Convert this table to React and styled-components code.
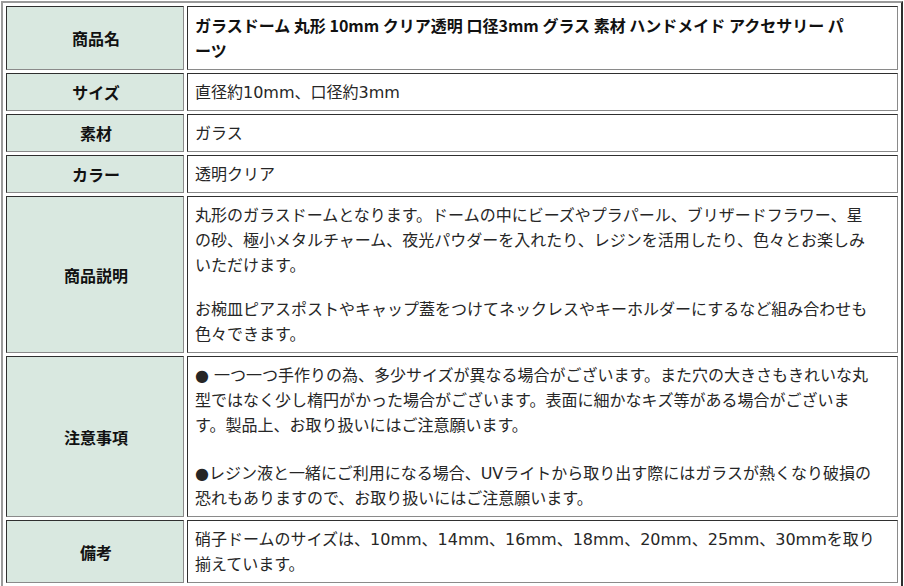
import React from "react";
import styled, { createGlobalStyle } from "styled-components";

const Global = createGlobalStyle`
  html, body { margin: 0; padding: 0; background: #ffffff; }
  body {
    font-family: "Noto Sans CJK JP", "Noto Sans", sans-serif;
    color: #222;
  }
`;

const Wrap = styled.div`
  padding: 1px;
  width: 902px;
`;

const Table = styled.table`
  width: 902px;
  table-layout: fixed;
  border-collapse: separate;
  border-spacing: 3px;
  border-style: solid;
  border-width: 2px 2px 3px 2px;
  border-color: #9a9a9a #2e2e2e #2e2e2e #9a9a9a;
  font-size: 16px;
  line-height: 25px;
`;

const Cell = styled.td`
  border-style: solid;
  border-width: 1px;
  border-color: #2f2f2f #8a8a8a #8a8a8a #2f2f2f;
  padding: 6px 8px ${(p) => p.$padBottom ?? 5}px 7px;
  vertical-align: middle;
  word-break: keep-all;
  white-space: nowrap;
`;

const Label = styled(Cell)`
  width: 176px;
  box-sizing: border-box;
  background: #d9e8e0;
  text-align: center;
  font-weight: 700;
  color: #111;
  padding-left: 2px;
  padding-right: 0;
`;

const Value = styled(Cell)`
  background: #ffffff;
  text-align: left;
  font-family: ${(p) =>
    p.$bold
      ? `"Noto Sans CJK JP", "Noto Sans", sans-serif`
      : `"DejaVu Sans", "Noto Sans CJK JP", sans-serif`};
  font-weight: ${(p) => (p.$bold ? 700 : 400)};
  color: ${(p) => (p.$bold ? "#111" : "#262626")};
`;

const Para = styled.div`
  margin-top: ${(p) => p.$gap || 0}px;
`;

const rows = [
  {
    label: "商品名",
    bold: true,
    padBottom: 6,
    paras: [["ガラスドーム 丸形 10mm クリア透明 口径3mm グラス 素材 ハンドメイド アクセサリー パ", "ーツ"]],
  },
  { label: "サイズ", paras: [["直径約10mm、口径約3mm"]] },
  { label: "素材", paras: [["ガラス"]] },
  { label: "カラー", paras: [["透明クリア"]] },
  {
    label: "商品説明",
    gap: 19,
    paras: [
      [
        "丸形のガラスドームとなります。ドームの中にビーズやプラパール、ブリザードフラワー、星",
        "の砂、極小メタルチャーム、夜光パウダーを入れたり、レジンを活用したり、色々とお楽しみ",
        "いただけます。",
      ],
      [
        "お椀皿ピアスポストやキャップ蓋をつけてネックレスやキーホルダーにするなど組み合わせも",
        "色々できます。",
      ],
    ],
  },
  {
    label: "注意事項",
    gap: 23,
    paras: [
      [
        "● 一つ一つ手作りの為、多少サイズが異なる場合がございます。また穴の大きさもきれいな丸",
        "型ではなく少し楕円がかった場合がございます。表面に細かなキズ等がある場合がございま",
        "す。製品上、お取り扱いにはご注意願います。",
      ],
      [
        "●レジン液と一緒にご利用になる場合、UVライトから取り出す際にはガラスが熱くなり破損の",
        "恐れもありますので、お取り扱いにはご注意願います。",
      ],
    ],
  },
  {
    label: "備考",
    paras: [
      [
        "硝子ドームのサイズは、10mm、14mm、16mm、18mm、20mm、25mm、30mmを取り",
        "揃えています。",
      ],
    ],
  },
];

export default function App() {
  return (
    <>
      <Global />
      <Wrap>
        <Table>
          <colgroup>
            <col style={{ width: 178 }} />
            <col />
          </colgroup>
          <tbody>
            {rows.map((r) => (
              <tr key={r.label}>
                <Label $padBottom={r.padBottom}>{r.label}</Label>
                <Value $bold={r.bold} $padBottom={r.padBottom}>
                  {r.paras.map((lines, i) => (
                    <Para key={i} $gap={i > 0 ? r.gap : 0}>
                      {lines.map((l, j) => (
                        <React.Fragment key={j}>
                          {j > 0 && <br />}
                          {l}
                        </React.Fragment>
                      ))}
                    </Para>
                  ))}
                </Value>
              </tr>
            ))}
          </tbody>
        </Table>
      </Wrap>
    </>
  );
}
